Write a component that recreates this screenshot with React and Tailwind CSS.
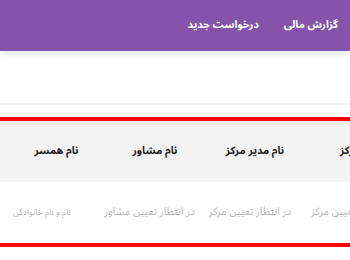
import React from 'react';

const font = { fontFamily: '"Noto Sans Arabic", "DejaVu Sans", sans-serif' };

export default function App() {
  return (
    <div className="w-[350px] h-[260px] overflow-hidden bg-white" style={font}>
      {/* Top nav */}
      <div className="relative z-10 h-[51px] bg-[#8553a9] shadow-[0_2px_8px_rgba(0,0,0,0.12)] flex flex-row-reverse items-center pr-[12px] gap-[25px]">
        <a className="text-white text-[10.5px] font-bold whitespace-nowrap" dir="rtl">گزارش مالی</a>
        <a className="text-white text-[10.5px] font-bold whitespace-nowrap" dir="rtl">درخواست جدید</a>
      </div>

      {/* Page card */}
      <div className="h-[54px] border-b-2 border-[#f0f0f0]" />

      <div className="mt-[12px] border-t-4 border-b-4 border-[#ff0000] w-[350px] overflow-hidden">
        <div className="w-[410px]">
          <div className="grid grid-cols-[105px_100px_100px_105px] h-[61px] bg-[#f3f3f3] items-center text-[10.5px] font-bold text-[#222] whitespace-nowrap">
            <div className="text-center pl-[8px]" dir="rtl">نام همسر</div>
            <div className="text-center" dir="rtl">نام مشاور</div>
            <div className="text-center" dir="rtl">نام مدیر مرکز</div>
            <div className="text-center" dir="rtl">نام مرکز</div>
          </div>
          <div className="grid grid-cols-[105px_100px_100px_105px] h-[61px] bg-white items-center text-[#b5b5b5] text-[10.5px] whitespace-nowrap">
            <div className="text-center text-[8.5px] pr-[21px]" dir="rtl">نام و نام خانوادگی</div>
            <div className="text-center pr-[10px]" dir="rtl">در انتظار تعیین مشاور</div>
            <div className="text-center pr-[10px]" dir="rtl">در انتظار تعیین مرکز</div>
            <div className="text-center pr-[10px]" dir="rtl">در انتظار تعیین مرکز</div>
          </div>
        </div>
      </div>
    </div>
  );
}
